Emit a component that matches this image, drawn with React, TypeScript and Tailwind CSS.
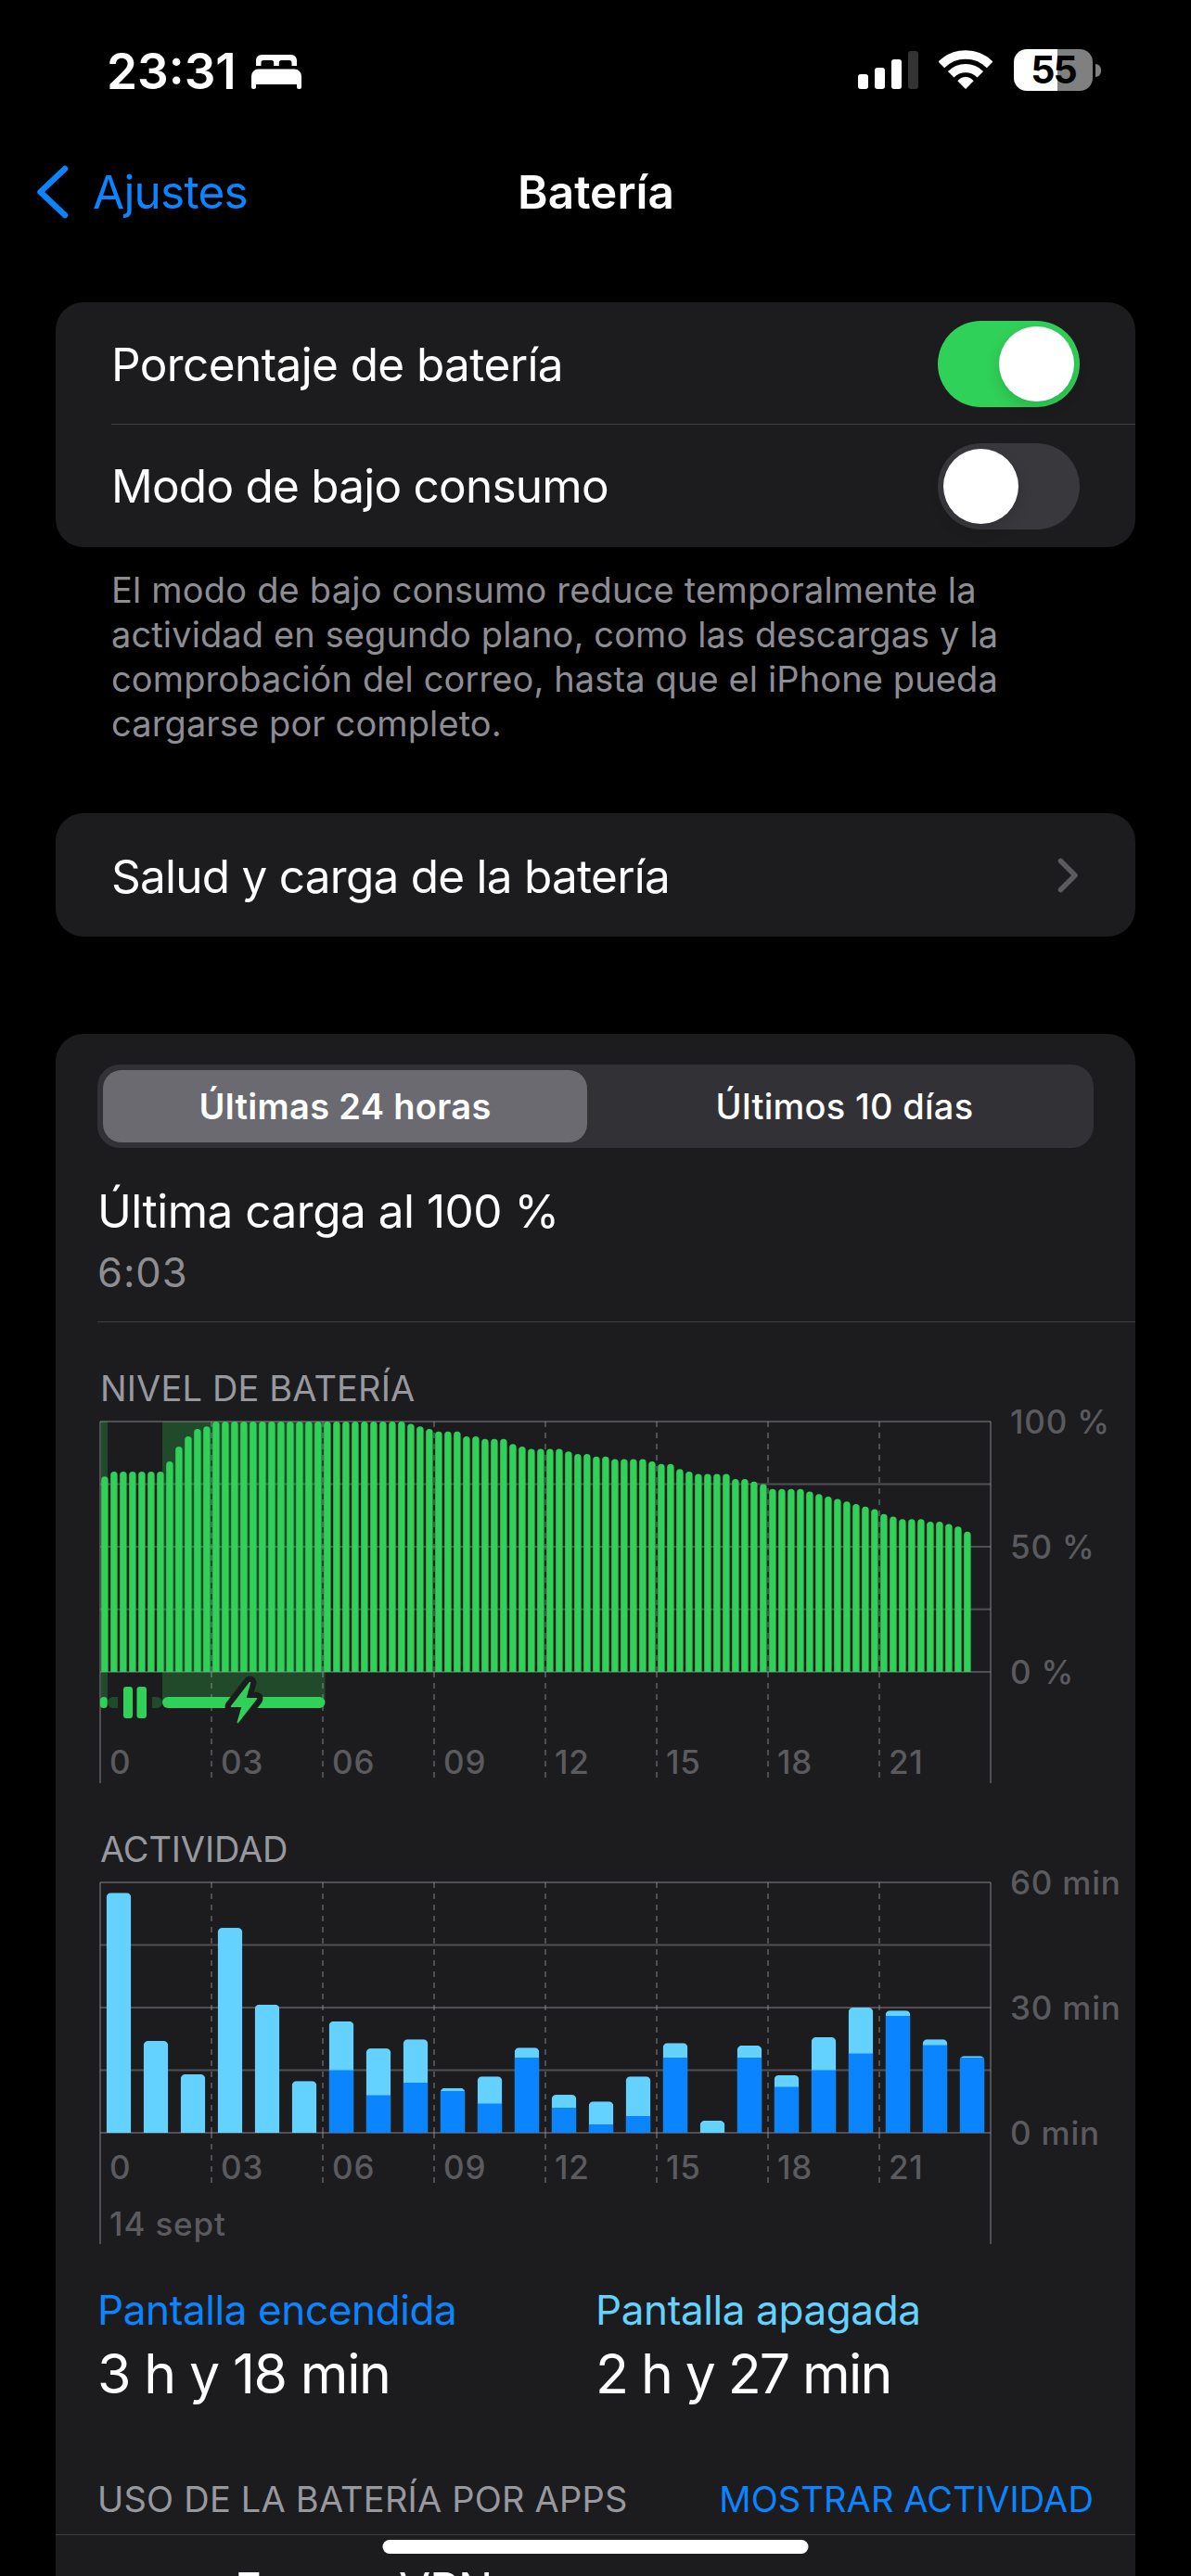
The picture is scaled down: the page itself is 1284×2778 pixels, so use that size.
import React, { useState } from "react";
import { clsx } from "clsx";

const LEVELS = [
  78, 80, 80, 80, 80, 80, 80, 84, 90, 94, 97, 98,
  100, 100, 100, 100, 100, 100, 100, 100, 100, 100, 100, 100,
  100, 100, 100, 100, 100, 100, 100, 100, 100, 99, 98, 97,
  96, 96, 96, 94, 94, 93, 93, 93, 91, 90, 89, 89,
  89, 89, 88, 87, 87, 86, 86, 85, 85, 85, 85, 84,
  83, 83, 81, 80, 79, 79, 79, 79, 77, 77, 76, 75,
  73, 73, 73, 73, 72, 71, 70, 69, 68, 67, 66, 65,
  63, 62, 61, 61, 61, 60, 60, 59, 58, 56,
];

// [total minutes, minutes with the screen on]
const ACTIVITY = [
  [57.5, 0], [22, 0], [14, 0], [49.1, 0], [30.7, 0], [12.4, 0],
  [26.7, 15], [20.2, 9], [22.4, 12], [10.7, 10], [13.5, 7], [20.4, 18],
  [9.1, 6], [7.5, 2], [13.5, 4], [21.5, 18], [2.9, 0], [20.9, 18],
  [13.8, 11], [22.9, 15], [30, 19], [29.3, 28], [22.4, 21], [18.4, 18],
];

const HOURS = ["0", "03", "06", "09", "12", "15", "18", "21"];

const PLOT_HEIGHT = 270;

function StatusBar() {
  return (
    <div className="flex h-[151px] shrink-0 items-center justify-between pl-[115px] pr-[97px]">
      <div className="flex items-center gap-4">
        <span className="pt-1 text-[53px] leading-none font-semibold">23:31</span>
        <svg width={54} height={37} viewBox="0 0 54 37" fill="#fff" className="mt-1">
          <path d="M5 12V6a6 6 0 0 1 6-6h32a6 6 0 0 1 6 6v6h-5.500V8.500a2.500 2.500 0 0 0-2.500-2.500h-8.500A2.500 2.500 0 0 0 29.800 8.500V12h-5.600V8.500A2.500 2.500 0 0 0 21.700 6H13a2.500 2.500 0 0 0-2.500 2.500V12z" />
          <path d="M0 23a7.500 7.500 0 0 1 7.500-7.500h39A7.500 7.500 0 0 1 54 23v12a2 2 0 0 1-2 2h-1a2 2 0 0 1-2-2v-3H5v3a2 2 0 0 1-2 2H2a2 2 0 0 1-2-2z" />
        </svg>
      </div>

      <div className="flex items-center">
        <div className="flex h-[41px] items-end gap-[7px]">
          <span className="h-4 w-[11px] rounded-[3px] bg-white" />
          <span className="h-[23px] w-[11px] rounded-[3px] bg-white" />
          <span className="h-8 w-[11px] rounded-[3px] bg-white" />
          <span className="h-[41px] w-[11px] rounded-[3px] bg-[#333]" />
        </div>

        <svg width={58} height={43} viewBox="0 0 58 43" fill="none" stroke="#fff" className="ml-[22px]">
          <path d="M2.840 15.840A37 37 0 0 1 55.160 15.840" strokeWidth={9.4} />
          <path d="M13.200 26.200A22.350 22.350 0 0 1 44.800 26.200" strokeWidth={9.3} />
          <path d="M29 42 20.300 33.300Q24 29 29 29T37.700 33.300Z" fill="#fff" stroke="none" />
        </svg>

        <div className="ml-[23px] flex h-[45px] w-[85px] items-center justify-center rounded-[14px] bg-linear-to-r from-white from-55% to-[#808080] to-55%">
          <span className="text-[41px] leading-none font-bold tracking-[-2px] text-black">55</span>
        </div>
        <span className="ml-[3px] h-[14px] w-[6px] rounded-r-full bg-[#808080]" />
      </div>
    </div>
  );
}

function NavBar() {
  return (
    <div className="grid h-[111px] shrink-0 grid-cols-[1fr_auto_1fr] items-center text-[49.500px]">
      <button type="button" className="flex items-center pl-[39px] text-[#0a84ff]">
        <svg width={35} height={58} viewBox="0 0 35 58" fill="none" className="mr-[26px]">
          <path d="M31 4 4.500 29 31 54" stroke="currentColor" strokeWidth={6.5} strokeLinecap="round" strokeLinejoin="round" />
        </svg>
        <span className="leading-[60px] tracking-[-0.770px]">Ajustes</span>
      </button>
      <h1 className="pl-px leading-[60px] font-semibold">Batería</h1>
    </div>
  );
}

function Toggle({ initial = false }: { initial?: boolean }) {
  const [on, setOn] = useState(initial);

  return (
    <button
      type="button"
      role="switch"
      aria-checked={on}
      className={clsx(
        "flex h-[93px] w-[153px] items-center rounded-full px-[6px]",
        on ? "justify-end bg-[#30d158]" : "justify-start bg-[#39393d]"
      )}
      onClick={() => setOn(!on)}
    >
      <span className="size-[81px] rounded-full bg-white shadow-[0_6px_16px_rgba(0,0,0,0.15)]" />
    </button>
  );
}

// Frame, grid and hour labels shared by both charts
function ChartGrid({ labels, dashEnd, hourY }: { labels: string[]; dashEnd: number; hourY: number }) {
  return (
    <>
      <g stroke="#98989f" strokeOpacity={0.42} strokeWidth={2}>
        {[0, 67.5, 135, 202.5, 270].map((y) => (
          <line key={y} x1={0} x2={960} y1={y} y2={y} />
        ))}
        <line x1={0} x2={0} y1={0} y2={390} />
        <line x1={960} x2={960} y1={0} y2={390} />
        {[1, 2, 3, 4, 5, 6, 7].map((i) => (
          <path
            key={i}
            d={`M${i * 120} 0V${PLOT_HEIGHT}M${i * 120} ${PLOT_HEIGHT}V${dashEnd}`}
            strokeDasharray="6 6"
          />
        ))}
      </g>
      <g fill="#5b5b5f" fontSize={35} fontWeight={500} letterSpacing={0.8}>
        {HOURS.map((hour, i) => (
          <text key={hour} x={i * 120 + 10} y={hourY}>{hour}</text>
        ))}
        {labels.map((label, i) => (
          <text key={label} x={981} y={i * 135 + 13}>{label}</text>
        ))}
      </g>
    </>
  );
}

function BatteryChart() {
  return (
    <svg width={1164} height={410} viewBox="0 0 1164 410" className="block overflow-visible">
      <g transform="translate(48 16)">
        <g fill="#214a2b">
          <rect x={1} width={7} height={303} />
          <rect x={67} width={175.5} height={303} />
        </g>

        <ChartGrid labels={["100 %", "50 %", "0 %"]} dashEnd={384} hourY={380} />

        {LEVELS.map((level, i) => {
          const x = i * 10 + 1.2;
          const top = PLOT_HEIGHT - level * 2.7;
          return (
            <path
              key={i}
              d={`M${x} ${PLOT_HEIGHT}V${top + 3.6}a3.700 3.700 0 0 1 7.400 0V${PLOT_HEIGHT}z`}
              fill="#30d158"
            />
          );
        })}

        {/* charging timeline */}
        <path d="M19 297h-5a6 6 0 0 0 0 12h5zM56 297h5a6 6 0 0 1 0 12h-5z" fill="#214a2b" />
        <g fill="#30d158">
          <rect y={297} width={7.7} height={12} rx={3.85} />
          <rect x={67} y={297} width={175.5} height={12} rx={6} />
          <rect x={25} y={286} width={10} height={34} rx={3} />
          <rect x={39.5} y={286} width={10.5} height={34} rx={3} />
        </g>
        <path
          d="M161.500 281.500 156.700 298.800H168.500L148.300 324.500 153.200 307.200H141.500z"
          fill="#30d158"
          stroke="#1c1c1e"
          strokeWidth={14}
          strokeLinejoin="round"
        />
        <path
          d="M161.500 281.500 156.700 298.800H168.500L148.300 324.500 153.200 307.200H141.500z"
          fill="#30d158"
          stroke="#30d158"
          strokeWidth={1.5}
          strokeLinejoin="round"
        />
      </g>
    </svg>
  );
}

function ActivityChart() {
  return (
    <svg width={1164} height={410} viewBox="0 0 1164 410" className="block overflow-visible">
      <g transform="translate(48 16)">
        <ChartGrid labels={["60 min", "30 min", "0 min"]} dashEnd={324} hourY={320} />
        <text x={10} y={381} fill="#5b5b5f" fontSize={35} fontWeight={500} letterSpacing={0.85}>14 sept</text>

        {ACTIVITY.map(([total, screenOn], i) => {
          const x = i * 40 + 6.7;
          const top = PLOT_HEIGHT - total * 4.5;
          const clip = `activity-${i}`;
          return (
            <g key={i}>
              <clipPath id={clip}>
                <path d={`M${x} ${PLOT_HEIGHT}V${top + 5}a5 5 0 0 1 5-5h16.600a5 5 0 0 1 5 5V${PLOT_HEIGHT}z`} />
              </clipPath>
              <g clipPath={`url(#${clip})`}>
                <rect x={x} y={top} width={26.6} height={total * 4.5} fill="#64d2ff" />
                <rect x={x} y={PLOT_HEIGHT - screenOn * 4.5} width={26.6} height={screenOn * 4.5} fill="#0a84ff" />
              </g>
            </g>
          );
        })}
      </g>
    </svg>
  );
}

export default function App() {
  return (
    <div className="relative flex h-[2778px] w-[1284px] flex-col overflow-hidden bg-black font-[Inter,sans-serif] text-white">
      <StatusBar />
      <NavBar />

      <main className="mx-15 flex flex-col pt-16">
        <section className="rounded-[30px] bg-[#1c1c1e] pl-15 text-[49.500px]">
          <div className="flex h-33 items-center justify-between border-b border-[#3d3d41] pt-[2px] pr-15">
            <span className="leading-[60px] tracking-[-0.600px]">Porcentaje de batería</span>
            <Toggle initial />
          </div>
          <div className="flex h-33 items-center justify-between pr-15">
            <span className="leading-[60px] tracking-[-0.770px]">Modo de bajo consumo</span>
            <Toggle />
          </div>
        </section>

        <p className="mt-[22px] pl-15 text-[38px] leading-12 tracking-[0.120px] text-[#8d8d93]">
          <span className="tracking-[0.200px]">El modo de bajo consumo reduce temporalmente la</span>
          <br />
          actividad en segundo plano, como las descargas y la
          <br />
          comprobación del correo, hasta que el iPhone pueda
          <br />
          cargarse por completo.
        </p>

        <section className="mt-[73px] flex h-[133px] items-center justify-between rounded-[30px] bg-[#1c1c1e] pr-[61px] pl-15">
          <span className="pt-[2px] text-[49.500px] leading-[60px] tracking-[-0.750px]">Salud y carga de la batería</span>
          <svg width={24} height={38} viewBox="0 0 24 38" fill="none">
            <path d="M4.500 3.500 20 19 4.500 34.500" stroke="#5a5a5f" strokeWidth={5.5} strokeLinecap="round" strokeLinejoin="round" />
          </svg>
        </section>

        <section className="mt-[105px] flex flex-col rounded-t-[30px] bg-[#1c1c1e] pt-[33px]">
          <div className="mx-[45px] flex h-[90px] gap-[9px] rounded-[24px] bg-[#323236] p-[6px] pr-0 text-[38px] leading-[78px]">
            <button type="button" className="w-[522px] rounded-[20px] bg-[#6a6a70] font-semibold tracking-[0.320px]">
              Últimas 24 horas
            </button>
            <button type="button" className="flex-1 font-medium tracking-[0.280px]">
              Últimos 10 días
            </button>
          </div>

          <h2 className="mt-[38px] pl-[45px] text-[49.500px] leading-[60px] tracking-[-0.500px]">Última carga al 100 %</h2>
          <p className="mt-[11px] pl-[45px] text-[43.500px] leading-[50px] tracking-[0.900px] text-[#8e8e92]">6:03</p>
          <hr className="mt-7 ml-[45px] border-[#3d3d41]" />

          <h3 className="mt-[51px] pl-12 text-[38px] leading-10 tracking-[0.140px] text-[#98989f]">NIVEL DE BATERÍA</h3>
          <BatteryChart />

          <h3 className="mt-[47px] pl-12 text-[38px] leading-10 tracking-[-0.150px] text-[#98989f]">ACTIVIDAD</h3>
          <ActivityChart />

          <div className="mx-[45px] mt-[39px] grid grid-cols-2">
            <div>
              <p className="text-[44px] leading-14 tracking-[-0.380px] text-[#0a84ff]">Pantalla encendida</p>
              <p className="mt-[6px] text-[59px] leading-[70px] tracking-[-1.390px]">3 h y 18 min</p>
            </div>
            <div>
              <p className="text-[44px] leading-14 tracking-[-0.380px] text-[#64d2ff]">Pantalla apagada</p>
              <p className="mt-[6px] text-[59px] leading-[70px] tracking-[-1.850px]">2 h y 27 min</p>
            </div>
          </div>

          <div className="mx-[45px] mt-20 flex justify-between text-[38px] leading-10">
            <h3 className="tracking-[0.210px] text-[#98989f]">USO DE LA BATERÍA POR APPS</h3>
            <button type="button" className="tracking-[0.120px] text-[#0a84ff]">MOSTRAR ACTIVIDAD</button>
          </div>
          <hr className="mt-[18px] border-[#3d3d41]" />
          <p className="mt-7 pl-[193px] text-[49.500px] leading-[60px] tracking-[-0.950px]">ExpressVPN</p>
        </section>
      </main>

      {/* home indicator */}
      <div className="absolute bottom-6 left-1/2 h-[15px] w-[459px] -translate-x-1/2 rounded-full bg-white" />
    </div>
  );
}
